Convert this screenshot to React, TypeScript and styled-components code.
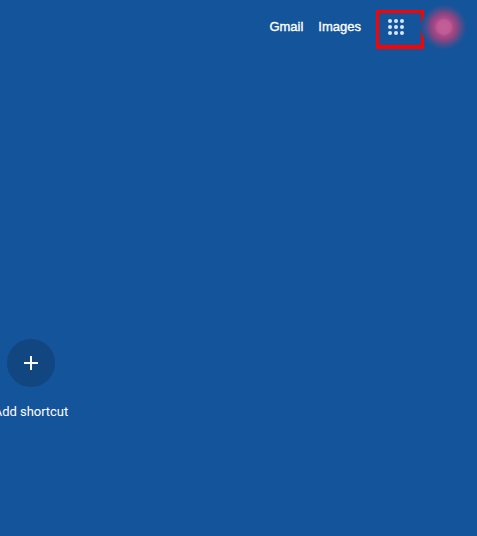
import styled, { createGlobalStyle } from 'styled-components';

const GlobalStyle = createGlobalStyle`
  html, body {
    margin: 0;
    height: 100%;
    overflow: hidden;
    background: #13549a;
  }
`

export default function App() {
  return (
    <>
      <GlobalStyle />
      <Page>
        <Header>
          <NavLink href="#">Gmail</NavLink>
          <NavLink href="#">Images</NavLink>
          <AppsButton aria-label="Google apps">
            <svg width="18" height="18" viewBox="0 0 18 18" fill="#d6e6f7">
              {[3, 9, 15].map((y) =>
                [3, 9, 15].map((x) => <circle key={`${x}-${y}`} cx={x} cy={y} r="2" />)
              )}
            </svg>
          </AppsButton>
          <Avatar />
        </Header>
        <Shortcuts>
          <Shortcut>
            <ShortcutIcon>
              <svg width="16" height="16" viewBox="0 0 16 16" stroke="#fff" strokeWidth="2">
                <path d="M8 1v14M1 8h14" />
              </svg>
            </ShortcutIcon>
            <ShortcutLabel>Add shortcut</ShortcutLabel>
          </Shortcut>
        </Shortcuts>
      </Page>
    </>
  );
}

const Page = styled.div`
  width: 477px;
  height: 536px;
  background: #13549a;
  font-family: Roboto, "Liberation Sans", Arial, sans-serif;
  color: #fff;
`

const Header = styled.header`
  display: flex;
  align-items: center;
  justify-content: flex-end;
  height: 39px;
  padding: 10px 13px 0 0;
`

const NavLink = styled.a`
  margin-right: 15px;
  margin-bottom: 5px;
  color: #fff;
  font-family: "Liberation Sans", Arial, sans-serif;
  font-size: 13px;
  -webkit-text-stroke: 0.35px #fff;
  line-height: 34px;
  text-decoration: none;
`

const AppsButton = styled.div`
  box-sizing: border-box;
  display: flex;
  align-items: center;
  justify-content: center;
  width: 48px;
  height: 39px;
  padding: 0 8px 4px 0;
  border: 3px solid #ff0000;
  border-bottom-width: 4px;
`

const Avatar = styled.div`
  flex: none;
  width: 46px;
  height: 46px;
  margin: 0 -3px 5px;
  border-radius: 50%;
  background: radial-gradient(circle closest-side, #c2609a 0, #c05a95 30%, #a84a87 40%, #8c4482 58%, #3f5090 80%, #13549a 100%);
`

const Shortcuts = styled.div`
  display: flex;
  padding-top: 290px;
`

const Shortcut = styled.div`
  display: flex;
  flex-direction: column;
  align-items: center;
  width: 112px;
  margin-left: -25px;
`

const ShortcutIcon = styled.div`
  display: flex;
  align-items: center;
  justify-content: center;
  width: 48px;
  height: 48px;
  border-radius: 50%;
  background: #124680;
`

const ShortcutLabel = styled.div`
  margin-top: 17px;
  font-size: 13px;
  line-height: 16px;
  letter-spacing: -0.05px;
  white-space: nowrap;
`
